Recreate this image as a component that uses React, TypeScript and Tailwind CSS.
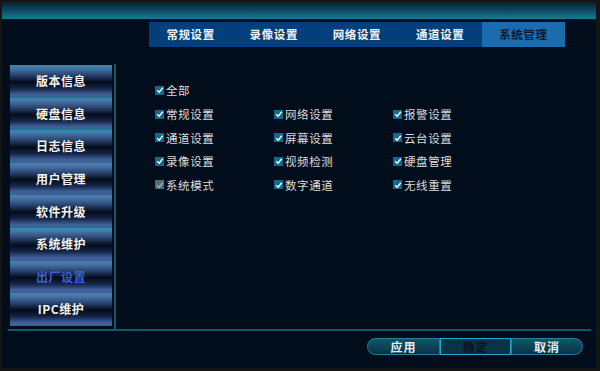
import React from "react";

const tabs = ["常规设置", "录像设置", "网络设置", "通道设置", "系统管理"];
const side = ["版本信息", "硬盘信息", "日志信息", "用户管理", "软件升级", "系统维护", "出厂设置", "IPC维护"];
const rows: { t: string; d?: boolean }[][] = [
  [{ t: "常规设置" }, { t: "网络设置" }, { t: "报警设置" }],
  [{ t: "通道设置" }, { t: "屏幕设置" }, { t: "云台设置" }],
  [{ t: "录像设置" }, { t: "视频检测" }, { t: "硬盘管理" }],
  [{ t: "系统模式", d: true }, { t: "数字通道" }, { t: "无线重置" }],
];

const font = { fontFamily: '"Noto Sans CJK SC", "DejaVu Sans", sans-serif' };

function Check({ label, disabled }: { label: string; disabled?: boolean }) {
  return (
    <div className="flex items-center h-[14px]">
      <div
        className={
          "w-[9px] h-[9px] flex items-center justify-center " +
          (disabled ? "bg-[#4f6b78]" : "bg-[#0f6a8c]")
        }
      >
        <svg width="8" height="8" viewBox="0 0 8 8">
          <path d="M1.2 4.2 L3.2 6.2 L6.8 1.8" stroke={disabled ? "#9fb0b8" : "#ffffff"} strokeWidth="1.4" fill="none" />
        </svg>
      </div>
      <span className="ml-[2px] text-[11.5px] leading-[14px] text-[#dcdcdc] tracking-[0.6px]">{label}</span>
    </div>
  );
}

export default function App() {
  return (
    <div className="w-[600px] h-[371px] bg-[#151515] p-[2px] pr-[4px] pb-[3px]" style={font}>
      <div className="w-full h-full bg-[#020d1b] flex flex-col">
        <div className="h-[18px] bg-[linear-gradient(to_bottom,#08202c,#0d4a60_50%,#1a7a96)] border-b-[1px] border-[#04141e]" />
        <div className="ml-[147px] mt-[2px] flex h-[25px] w-[416px] bg-[#023f7c]">
          {tabs.map((t, i) => (
            <div
              key={t}
              className={
                "w-[83.2px] flex items-center justify-center text-[11.5px] font-bold tracking-[0.6px] " +
                (i === 4 ? "bg-[#1a6cae] text-[#0a1a2e]" : "text-[#f0f0f0]")
              }
            >
              {t}
            </div>
          ))}
        </div>
        <div className="flex mt-[17px] ml-[8px]">
          <div className="flex flex-col w-[102px] pt-[1px]">
            {side.map((s, i) => (
              <div
                key={s}
                className={
                  "h-[32.6px] flex items-center justify-center text-[12px] font-bold tracking-[0.5px] bg-[linear-gradient(to_bottom,#2a8fb0_0%,#4a74a6_10%,#2c4a78_28%,#040b1a_52%,#15264a_72%,#41619a_90%,#3d6092_100%)] " +
                  (i === 6 ? "text-[#3d5fd8]" : "text-[#f4f4f4]")
                }
              >
                {s}
              </div>
            ))}
          </div>
          <div className="ml-[2px] w-[2px] bg-[#0e5a6a] h-[265px]" />
          <div className="flex flex-col ml-[39px] pt-[19px]">
            <Check label="全部" />
            <div className="flex flex-col mt-[10px] gap-[9.6px]">
              {rows.map((r, i) => (
                <div key={i} className="flex">
                  {r.map((c) => (
                    <div key={c.t} className="w-[119px]">
                      <Check label={c.t} disabled={c.d} />
                    </div>
                  ))}
                </div>
              ))}
            </div>
          </div>
        </div>
        <div className="ml-[6px] w-[583px] h-[2px] bg-[#0e5a6a]" />
        <div className="flex ml-[365px] mt-[7px] h-[17px] text-[12px] font-bold text-[#eaeaea] tracking-[1px]">
          <div className="w-[73px] flex items-center justify-center rounded-l-full border border-[#2d7c98] bg-[linear-gradient(to_bottom,#11566c,#083246)]">应用</div>
          <div className="w-[71px] flex items-center justify-center border border-[#1ba6cf] bg-[#0a3446] text-[#051822]">确定</div>
          <div className="w-[72px] flex items-center justify-center rounded-r-full border border-[#2d7c98] bg-[linear-gradient(to_bottom,#11566c,#083246)]">取消</div>
        </div>
      </div>
    </div>
  );
}
